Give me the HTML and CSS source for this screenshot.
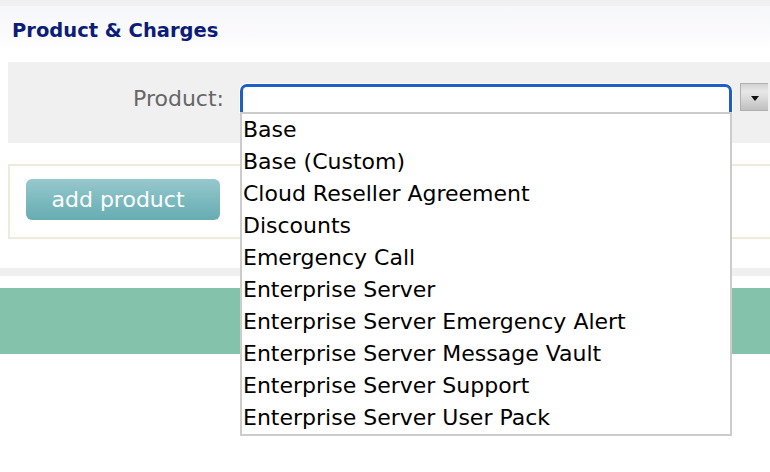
FILE: index.html
```html
<!DOCTYPE html>
<html>
<head>
<meta charset="utf-8">
<link rel="stylesheet" href="styles.css">
</head>
<body>
<div class="page">
  <div class="topband"></div>
  <div class="header"><h1 class="title">Product &amp; Charges</h1></div>
  <div class="panel">
    <label class="label">Product:</label>
    <div class="combo">
      <div class="input"></div>
      <ul class="list">
        <li>Base</li>
        <li>Base (Custom)</li>
        <li>Cloud Reseller Agreement</li>
        <li>Discounts</li>
        <li>Emergency Call</li>
        <li>Enterprise Server</li>
        <li>Enterprise Server Emergency Alert</li>
        <li>Enterprise Server Message Vault</li>
        <li>Enterprise Server Support</li>
        <li>Enterprise Server User Pack</li>
      </ul>
    </div>
    <div class="dropbtn"><span class="tri"></span></div>
  </div>
  <div class="box">
    <button class="addbtn">add product</button>
  </div>
  <div class="band"></div>
  <div class="green"></div>
</div>
</body>
</html>
```

FILE: styles.css
```css
html, body {
  margin: 0;
  padding: 0;
  background: #ffffff;
  overflow: hidden;
}
.page {
  width: 770px;
  height: 472px;
  font-family: "DejaVu Sans", Verdana, sans-serif;
}
.topband {
  height: 6px;
  background: #f0f0f0;
}
.header {
  height: 44px;
  background: linear-gradient(#f6f7fb, #fbfbfd 70%, #ffffff);
  padding-left: 12px;
  box-sizing: border-box;
}
.title {
  margin: 0;
  padding-top: 13px;
  font-size: 19.5px;
  line-height: 24px;
  font-weight: bold;
  color: #0b1d78;
}
.panel {
  margin-top: 12px;
  margin-left: 8px;
  height: 81px;
  box-sizing: border-box;
  padding-top: 22px;
  background: #f0f0f0;
  display: flex;
  align-items: flex-start;
}
.label {
  width: 216px;
  text-align: right;
  font-size: 22px;
  line-height: 30px;
  color: #666666;
}
.combo {
  position: relative;
  margin-left: 16px;
  width: 492px;
  height: 28px;
}
.input {
  box-sizing: border-box;
  width: 492px;
  height: 28px;
  background: #ffffff;
  border: 3px solid #1e5ec8;
  border-bottom: none;
  border-radius: 7px 7px 0 0;
  box-shadow: 0 0 0 1px #ffffff;
}
.list {
  position: absolute;
  left: 0;
  top: 28px;
  width: 492px;
  box-sizing: border-box;
  margin: 0;
  padding: 0;
  list-style: none;
  background: #ffffff;
  border: 2px solid #cccccc;
  z-index: 5;
}
.list li {
  height: 32px;
  line-height: 32px;
  font-size: 22px;
  color: #000000;
  padding-left: 1px;
  white-space: nowrap;
}
.dropbtn {
  margin-left: 8px;
  margin-top: -1px;
  width: 28px;
  height: 28px;
  box-sizing: border-box;
  background: linear-gradient(#d2d2d2, #e8e8e8 30%, #bfbfbf);
  border: 1px solid #b0b0b0;
  border-right: none;
  display: flex;
  align-items: center;
  justify-content: center;
}
.tri {
  width: 0;
  height: 0;
  border-left: 4px solid transparent;
  border-right: 4px solid transparent;
  border-top: 5px solid #111111;
  margin-top: 2px;
}
.box {
  margin-top: 21px;
  margin-left: 8px;
  height: 75px;
  box-sizing: border-box;
  border: 2px solid #eeeadc;
  border-right: none;
  padding-left: 16px;
  padding-top: 13px;
}
.addbtn {
  width: 194px;
  height: 41px;
  border: none;
  border-radius: 6px;
  background: linear-gradient(#97c8cd, #7ab9be 55%, #67acb1);
  color: #ffffff;
  font-family: "DejaVu Sans", Verdana, sans-serif;
  font-size: 22px;
  padding: 0 10px 1px 0;
}
.band {
  margin-top: 29px;
  height: 8px;
  background: #f0f0f0;
}
.green {
  margin-top: 12px;
  height: 66px;
  background: #84c2ac;
}
```
